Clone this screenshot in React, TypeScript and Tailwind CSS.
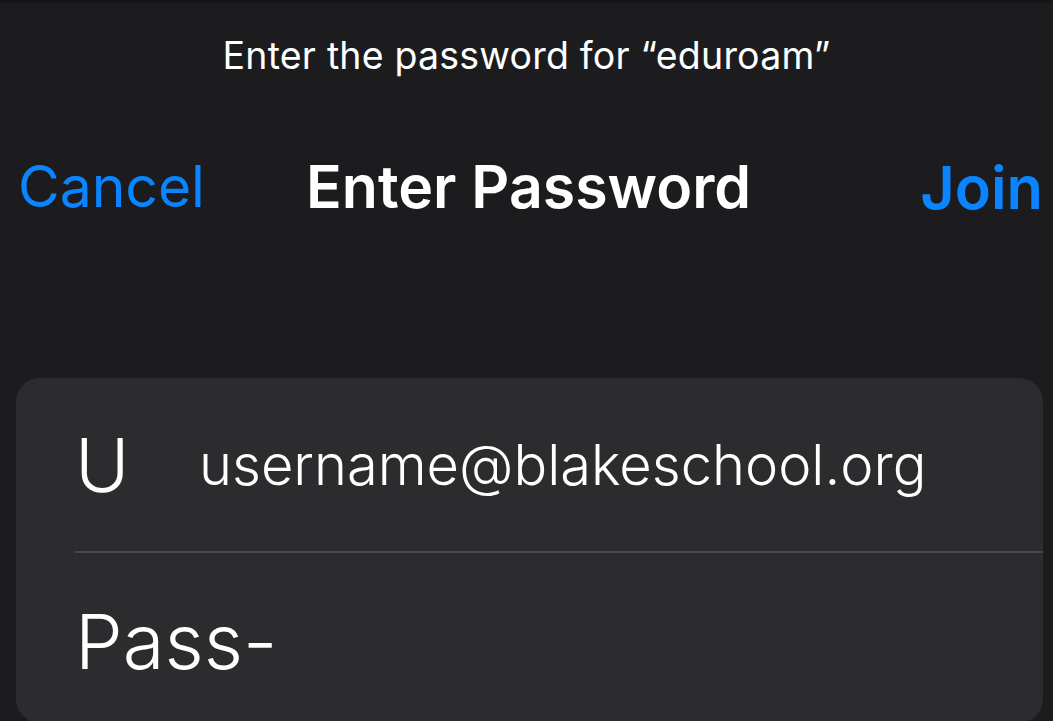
export default function App() {
  return (
    <div className="h-[721px] w-[1053px] overflow-hidden bg-[#1c1c1e] font-['Inter','Noto_Sans',sans-serif] text-white">
      <div className="h-[3px] bg-[#161618]" />
      <p className="pt-[31px] text-center text-[37.5px] leading-[44px] tracking-[0.2px]">
        Enter the password for “eduroam”
      </p>

      <div className="mt-[74px] flex items-center justify-between pl-[18px] pr-[10px]">
        <span className="text-[57px] leading-[70px] text-[#0a84ff]">Cancel</span>
        <span className="-ml-[68px] text-[59px] font-semibold leading-[70px]">Enter Password</span>
        <span className="text-[59.5px] font-semibold leading-[70px] text-[#0a84ff]">Join</span>
      </div>

      <div className="ml-[16px] mr-[10px] mt-[156px] h-[345px] rounded-[24px] bg-[#2c2c2e]">
        <div className="flex h-[173px] items-center pl-[59px]">
          <span className="w-[124px] text-[74px] font-light leading-none">U</span>
          <span className="text-[56px] font-light leading-none">username@blakeschool.org</span>
        </div>
        <div className="ml-[59px] h-[2px] bg-[#48484a]" />
        <div className="flex items-start pl-[59px] pt-[50px]">
          <span className="text-[76px] font-light leading-none">Pass-</span>
        </div>
      </div>
    </div>
  );
}
